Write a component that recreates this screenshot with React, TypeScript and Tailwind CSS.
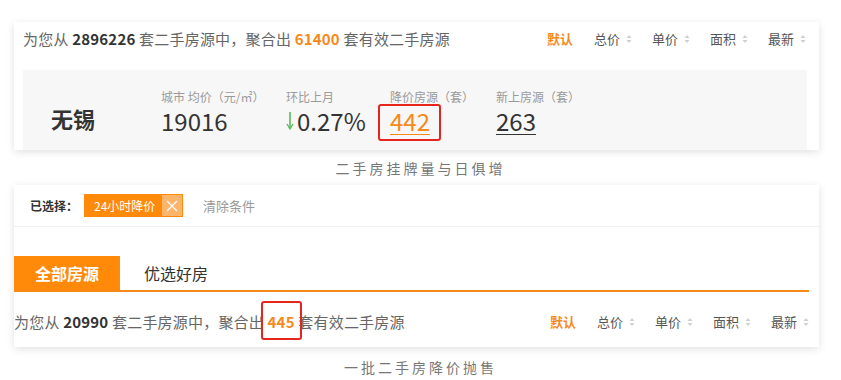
import React from "react"

const font = { fontFamily: '"Noto Sans CJK SC", "Liberation Sans", sans-serif' }

function SortArrow() {
    return (
        <svg width="6" height="10" viewBox="0 0 6 10" className="ml-[6px]">
            <path d="M3 1 L5.5 4 L0.5 4 Z" fill="#d0d0d0" />
            <path d="M3 9 L5.5 6 L0.5 6 Z" fill="#d0d0d0" />
        </svg>
    )
}

function SortBar() {
    const items = ["总价", "单价", "面积"]
    return (
        <div className="flex items-center text-[13px] text-[#555]">
            <span className="w-[47px] font-bold text-[#f7891c]">默认</span>
            {items.map((t) => (
                <span key={t} className="w-[58px] flex items-center">
                    {t}
                    <SortArrow />
                </span>
            ))}
            <span className="flex items-center">
                最新
                <SortArrow />
            </span>
        </div>
    )
}

function Stat({ label, children, width }: { label: string; children: React.ReactNode; width: string }) {
    return (
        <div className={`${width} flex flex-col`}>
            <span className="text-[12px] leading-[16px] text-[#9a9a9a]">{label}</span>
            <div className="mt-[2px] text-[24px] leading-[28px] text-[#333]">{children}</div>
        </div>
    )
}

export default function App() {
    return (
        <div className="w-[841px] h-[380px] bg-white overflow-hidden" style={font}>

            {/* 上半部分：统计卡片 */}
            <div className="ml-[14px] mt-[22px] w-[805px] h-[128px] bg-white shadow-[0_2px_8px_rgba(0,0,0,0.12)] overflow-hidden">
                <div className="flex items-center justify-between pl-[9px] pr-[13px] pt-[7px]">
                    <p className="text-[15px] leading-[20px] text-[#666] tracking-[0.2px]">
                        为您从 <b className="text-[#333]">2896226</b> 套二手房源中，聚合出 <b className="text-[#f7891c]">61400</b> 套有效二手房源
                    </p>
                    <SortBar />
                </div>

                <div className="ml-[9px] mt-[21px] w-[784px] h-[80px] bg-[#f7f7f7] flex items-start pl-[28px] pt-[19px]">
                    <div className="w-[110px] mt-[14px] text-[22px] leading-[30px] font-bold text-[#333]">无锡</div>
                    <Stat label="城市 均价（元/㎡）" width="w-[125px]">19016</Stat>
                    <Stat label="环比上月" width="w-[104px]">
                        <span className="flex items-center">
                            <svg width="8" height="20" viewBox="0 0 8 20" className="mr-[3px]">
                                <path d="M4 1 V17" stroke="#5cb85c" strokeWidth="1.6" />
                                <path d="M1 13 L4 18 L7 13" stroke="#5cb85c" strokeWidth="1.4" fill="none" />
                            </svg>
                            0.27%
                        </span>
                    </Stat>
                    <Stat label="降价房源（套）" width="w-[106px]">
                        <span className="relative inline-block">
                            <span className="underline underline-offset-[3px] decoration-1 text-[#f7891c]">442</span>
                            <span className="absolute -left-[12px] -top-[3px] w-[63px] h-[37px] border-2 border-[#e8251d] rounded-[3px]" />
                        </span>
                    </Stat>
                    <Stat label="新上房源（套）" width="w-[120px]">
                        <span className="underline underline-offset-[3px] decoration-1">263</span>
                    </Stat>
                </div>
            </div>

            <p className="mt-[8px] text-center text-[14px] leading-[20px] tracking-[3px] text-[#777]">二手房挂牌量与日俱增</p>

            {/* 下半部分：筛选卡片 */}
            <div className="ml-[14px] mt-[7px] w-[805px] h-[162px] bg-white shadow-[0_2px_8px_rgba(0,0,0,0.12)] overflow-hidden">
                <div className="h-[42px] flex items-center pl-[16px] border-b border-[#f0f0f0]">
                    <span className="text-[12px] font-bold text-[#333]">已选择：</span>
                    <span className="ml-[6px] h-[23px] w-[99px] flex items-center bg-[#ff8a0a] text-white text-[12px]">
                        <span className="pl-[10px] flex-1">24小时降价</span>
                        <span className="w-[20px] h-[21px] mr-[1px] bg-[#fcb56b] flex items-center justify-center">
                            <svg width="12" height="12" viewBox="0 0 12 12">
                                <path d="M1 1 L11 11 M11 1 L1 11" stroke="white" strokeWidth="1.2" />
                            </svg>
                        </span>
                    </span>
                    <span className="ml-[20px] text-[13px] text-[#999]">清除条件</span>
                </div>

                <div className="mt-[29px] mr-[10px] flex items-end border-b-2 border-[#f7891c]">
                    <span className="w-[106px] h-[34px] flex items-center justify-center bg-[#ff8a0a] text-white text-[16px] font-bold">全部房源</span>
                    <span className="ml-[24px] h-[34px] flex items-center text-[16px] text-[#333]">优选好房</span>
                </div>

                <div className="h-[55px] flex items-center justify-between pr-[10px] pt-[4px]">
                    <p className="text-[15px] leading-[20px] text-[#666] tracking-[0.2px]">
                        为您从 <b className="text-[#333]">20990</b> 套二手房源中，聚合出{" "}
                        <span className="relative inline-block">
                            <b className="text-[#f7891c]">445</b>
                            <span className="absolute -left-[7px] -top-[11px] w-[41px] h-[39px] border-2 border-[#e8251d] rounded-[3px]" />
                        </span>{" "}
                        套有效二手房源
                    </p>
                    <SortBar />
                </div>
            </div>

            <p className="mt-[10px] text-center text-[14px] leading-[20px] tracking-[3px] text-[#777]">一批二手房降价抛售</p>
        </div>
    )
}
